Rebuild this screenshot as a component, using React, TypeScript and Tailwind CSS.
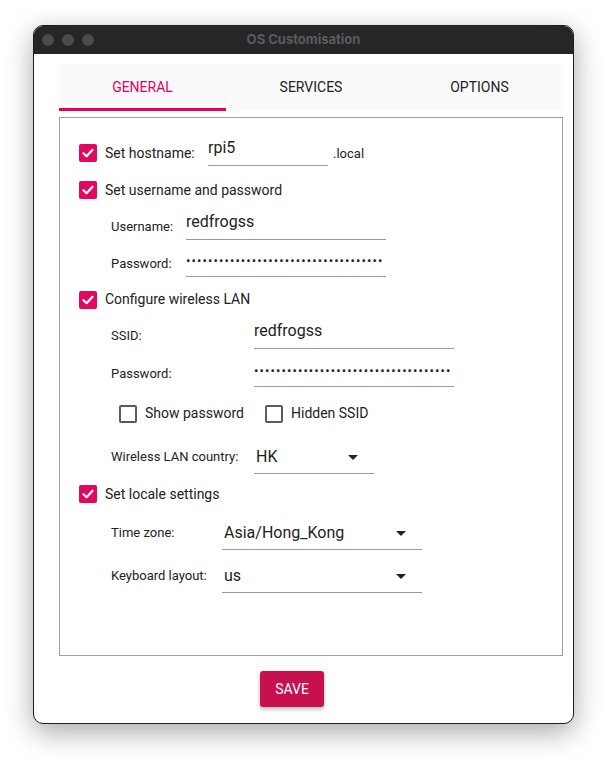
import React from "react";

function CheckOn() {
  return (
    <div className="w-[18px] h-[18px] rounded-[2px] bg-[#e2085f] flex items-center justify-center shrink-0">
      <svg width="14" height="14" viewBox="0 0 14 14">
        <path d="M2.5 7.2 L5.6 10.2 L11.5 3.8" fill="none" stroke="white" strokeWidth="2.2" strokeLinecap="round" strokeLinejoin="round" />
      </svg>
    </div>
  );
}

function CheckOff() {
  return <div className="w-[18px] h-[18px] rounded-[2px] border-2 border-[#5c5c5c] bg-white shrink-0" />;
}

function TextInput({ w, children }: { w: string; children?: React.ReactNode }) {
  return (
    <div className={`${w} h-[26px] border-b border-[#9a9a9a] flex items-end pb-[7px] shrink-0`}>
      <span className="text-[16px] leading-[20px] text-[#222]">{children}</span>
    </div>
  );
}

function DotsInput({ w }: { w: string }) {
  return (
    <div className={`${w} h-[26px] border-b border-[#9a9a9a] flex items-end pb-[6px] shrink-0`}>
      <span className="whitespace-nowrap text-[13px] leading-[18px] tracking-[1.1px] text-[#222]">
        {"•".repeat(36)}
      </span>
    </div>
  );
}

function Combo({ w, value }: { w: string; value: string }) {
  return (
    <div className={`${w} h-[34px] border-b border-[#9a9a9a] flex items-end justify-between pb-[6px] pl-[2px] pr-[15px] shrink-0`}>
      <span className="text-[16px] leading-[20px] text-[#222]">{value}</span>
      <svg width="12" height="20" viewBox="0 0 12 20">
        <path d="M1 8 L11 8 L6 13 Z" fill="#222" />
      </svg>
    </div>
  );
}

export default function App() {
  return (
    <div
      className="w-[607px] h-[766px] bg-white pt-[25px] pl-[33px]"
      style={{ fontFamily: "Roboto, 'Noto Sans', sans-serif" }}
    >
      <div className="w-[541px] h-[699px] rounded-[10px] border border-[#1e1e1e] bg-white overflow-hidden shadow-[0_8px_28px_rgba(0,0,0,0.35)] flex flex-col">
        {/* title bar */}
        <div className="h-[28px] bg-[#262628] relative flex items-center justify-center shrink-0">
          <div className="absolute left-[8px] top-[8px] flex gap-[8px]">
            <div className="w-[12px] h-[12px] rounded-full bg-[#4b4b4d]" />
            <div className="w-[12px] h-[12px] rounded-full bg-[#4b4b4d]" />
            <div className="w-[12px] h-[12px] rounded-full bg-[#4b4b4d]" />
          </div>
          <span
            className="text-[13px] font-bold text-[#5b5b5d]"
            style={{ fontFamily: "Inter, 'Liberation Sans', sans-serif" }}
          >
            OS Customisation
          </span>
        </div>

        {/* body */}
        <div className="flex-1 pl-[25px] pr-[10px] pt-[10px] flex flex-col">
          {/* tabs */}
          <div className="h-[47px] bg-[#fafafa] flex shrink-0">
            <div className="w-[167px] h-full flex flex-col">
              <div className="flex-1 flex items-center justify-center text-[14px] text-[#e5005f] pt-[2px]">GENERAL</div>
              <div className="h-[3px] bg-[#e5005f]" />
            </div>
            <div className="w-[170px] h-full flex items-center justify-center text-[14px] text-[#222]">SERVICES</div>
            <div className="flex-1 h-full flex items-center justify-center text-[14px] text-[#222]">OPTIONS</div>
          </div>

          {/* panel */}
          <div className="mt-[6px] h-[539px] border border-[#a0a0a0] pt-[17px] flex flex-col shrink-0 text-[#222]">
            {/* hostname */}
            <div className="h-[36px] flex items-center pl-[19px]">
              <CheckOn />
              <span className="ml-[8px] w-[103px] text-[14px]">Set hostname:</span>
              <TextInput w="w-[120px]">rpi5</TextInput>
              <span className="ml-[5px] text-[13px] mt-[2px]">.local</span>
            </div>
            {/* set user */}
            <div className="h-[38px] flex items-center pl-[19px]">
              <CheckOn />
              <span className="ml-[8px] text-[14px]">Set username and password</span>
            </div>
            <div className="h-[36px] flex items-center pl-[51px]">
              <span className="w-[75px] text-[13px]">Username:</span>
              <TextInput w="w-[200px]">redfrogss</TextInput>
            </div>
            <div className="h-[37px] flex items-center pl-[51px]">
              <span className="w-[75px] text-[13px]">Password:</span>
              <DotsInput w="w-[200px]" />
            </div>
            {/* wlan */}
            <div className="h-[35px] flex items-center pl-[19px]">
              <CheckOn />
              <span className="ml-[8px] text-[14px]">Configure wireless LAN</span>
            </div>
            <div className="h-[38px] flex items-center pl-[51px]">
              <span className="w-[143px] text-[13px]">SSID:</span>
              <TextInput w="w-[200px]">redfrogss</TextInput>
            </div>
            <div className="h-[38px] flex items-center pl-[51px]">
              <span className="w-[143px] text-[13px]">Password:</span>
              <DotsInput w="w-[200px]" />
            </div>
            <div className="h-[41px] flex items-center pl-[59px]">
              <CheckOff />
              <span className="ml-[8px] w-[120px] text-[14px]">Show password</span>
              <CheckOff />
              <span className="ml-[8px] text-[14px]">Hidden SSID</span>
            </div>
            <div className="h-[46px] flex items-center pl-[51px]">
              <span className="w-[143px] text-[13px]">Wireless LAN country:</span>
              <Combo w="w-[120px]" value="HK" />
            </div>
            {/* locale */}
            <div className="h-[28px] flex items-center pl-[19px]">
              <CheckOn />
              <span className="ml-[8px] text-[14px]">Set locale settings</span>
            </div>
            <div className="h-[50px] flex items-center pl-[51px]">
              <span className="w-[111px] text-[13px]">Time zone:</span>
              <Combo w="w-[200px]" value="Asia/Hong_Kong" />
            </div>
            <div className="h-[36px] flex items-center pl-[51px]">
              <span className="w-[111px] text-[13px]">Keyboard layout:</span>
              <Combo w="w-[200px]" value="us" />
            </div>
          </div>

          {/* save */}
          <div className="flex mt-[15px] pl-[201px]">
            <button className="w-[64px] h-[36px] rounded-[3px] bg-[#c8104e] text-white text-[14px] shadow-[0_2px_4px_rgba(0,0,0,0.3)]">
              SAVE
            </button>
          </div>
        </div>
      </div>
    </div>
  );
}
